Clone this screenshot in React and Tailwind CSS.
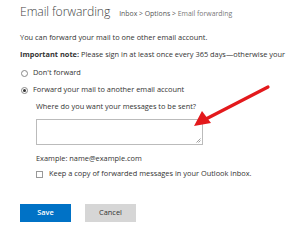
export default function App() {
  return (
    <div className="relative w-[300px] h-[241px] overflow-hidden bg-white text-[#333]" style={{ fontFamily: '"Open Sans", "Liberation Sans", sans-serif' }}>
      <div className="pl-[20px] pt-[5px]">
        <div className="flex items-baseline h-[14px]">
          <span className="text-[12.2px] font-light text-[#444] leading-[14px] tracking-[-0.1px]">Email forwarding</span>
          <span className="ml-[9px] text-[6.9px] text-[#555] whitespace-nowrap">Inbox &gt; Options &gt; <span className="text-[#777]">Email forwarding</span></span>
        </div>
        <div className="mt-[13px] text-[7.4px] leading-[10px] whitespace-nowrap">You can forward your mail to one other email account.</div>
        <div className="mt-[7px] text-[7.4px] leading-[10px] whitespace-nowrap"><span className="font-bold">Important note:</span> Please sign in at least once every 365 days—otherwise your</div>
        <div className="mt-[9px] flex items-center h-[10px] text-[7.4px] whitespace-nowrap">
          <span className="ml-[1px] w-[7px] h-[7px] rounded-full border border-[#888] bg-white"></span>
          <span className="ml-[5px]">Don't forward</span>
        </div>
        <div className="mt-[7px] flex items-center h-[10px] text-[7.4px] whitespace-nowrap">
          <span className="ml-[1px] w-[7px] h-[7px] rounded-full border border-[#888] bg-white flex items-center justify-center"><span className="w-[3px] h-[3px] rounded-full bg-[#333]"></span></span>
          <span className="ml-[5px]">Forward your mail to another email account</span>
        </div>
        <div className="pl-[16px]">
          <div className="mt-[6px] text-[7.4px] leading-[10px] whitespace-nowrap">Where do you want your messages to be sent?</div>
          <div className="mt-[8px] relative w-[167px] h-[26px] border border-[#bbb] bg-white">
            <svg className="absolute right-[1px] bottom-[1px]" width="5" height="5" viewBox="0 0 5 5"><path d="M4.5 0.5 L0.5 4.5 M4.5 2.5 L2.5 4.5" stroke="#888" strokeWidth="0.8" /></svg>
          </div>
          <div className="mt-[8px] text-[7.4px] leading-[10px] whitespace-nowrap">Example: name@example.com</div>
          <div className="mt-[6px] flex items-center h-[10px] text-[7.4px] whitespace-nowrap">
            <span className="w-[7px] h-[7px] border border-[#999] bg-white"></span>
            <span className="ml-[6px]">Keep a copy of forwarded messages in your Outlook inbox.</span>
          </div>
        </div>
        <div className="mt-[25px] flex gap-[14px]">
          <button className="w-[51px] h-[18px] bg-[#0072c6] text-white text-[7.4px] font-semibold">Save</button>
          <button className="w-[51px] h-[18px] bg-[#d6d6d6] text-[#333] text-[7.4px]">Cancel</button>
        </div>
      </div>
      <svg className="absolute left-0 top-0" width="300" height="241" viewBox="0 0 300 241">
        <line x1="268" y1="87" x2="204" y2="120" stroke="#e3191c" strokeWidth="3.2" strokeLinecap="round" />
        <polygon points="194,126 202,111 211,123" fill="#e3191c" />
      </svg>
    </div>
  );
}
